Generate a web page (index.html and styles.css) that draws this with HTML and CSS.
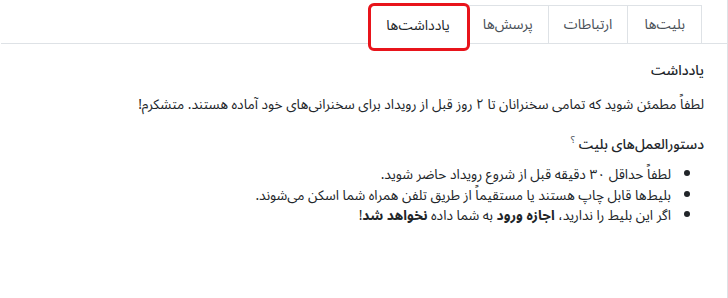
FILE: index.html
```html
<!DOCTYPE html>
<html lang="fa" dir="rtl">
<head>
<meta charset="utf-8">
<link rel="stylesheet" href="styles.css">
</head>
<body>
<div class="sheet">
  <nav class="tabs">
    <div class="tab">بلیت‌ها</div>
    <div class="tab">ارتباطات</div>
    <div class="tab">پرسش‌ها</div>
    <div class="tab active">یادداشت‌ها<span class="highlight"></span></div>
  </nav>
  <section class="pane">
    <h3 class="label">یادداشت</h3>
    <p class="note">لطفاً مطمئن شوید که تمامی سخنرانان تا ۲ روز قبل از رویداد برای سخنرانی‌های خود آماده هستند. متشکرم!</p>
    <h3 class="label second">دستورالعمل‌های بلیت <sup class="help">؟</sup></h3>
    <ul class="items">
      <li>لطفاً حداقل ۳۰ دقیقه قبل از شروع رویداد حاضر شوید.</li>
      <li>بلیط‌ها قابل چاپ هستند یا مستقیماً از طریق تلفن همراه شما اسکن می‌شوند.</li>
      <li>اگر این بلیط را ندارید، <b>اجازه ورود</b> به شما داده <b>نخواهد شد</b>!</li>
    </ul>
  </section>
</div>
</body>
</html>
```

FILE: styles.css
```css
html, body {
  margin: 0;
  padding: 0;
  background: #fff;
}
body {
  font-family: "Noto Sans Arabic", "Noto Sans Arabic UI", "Noto Naskh Arabic", "DejaVu Sans", sans-serif;
  color: #212529;
  font-size: 13.7px;
}
.sheet {
  width: 727px;
  height: 298px;
  border-right: 1px solid #dee2e6;
  box-sizing: border-box;
  direction: rtl;
}
.tabs {
  display: flex;
  padding: 5px 25px 0 0;
  border-bottom: 1px solid #dee2e6;
}
.tab {
  position: relative;
  height: 38px;
  padding: 0 15px;
  display: flex;
  align-items: center;
  border: 1px solid #dee2e6;
  border-bottom: none;
  margin-left: -1px;
  color: #495057;
  font-size: 14px;
  box-sizing: border-box;
}
.tab:first-child {
  padding: 0 16px;
}
.tab.active {
  color: #212529;
  background: #fff;
  margin-bottom: -1px;
  height: 39px;
  padding: 0 17px 0 16px;
}
.highlight {
  position: absolute;
  top: -3px;
  bottom: -7px;
  left: -2px;
  right: -3px;
  border: 3px solid #e8141b;
  border-radius: 6px;
}
.pane {
  padding: 0 23px 0 0;
}
.label {
  margin: 16px 0 0;
  font-size: 14px;
  font-weight: 500;
  line-height: 22px;
}
.label.second {
  margin-top: 18px;
}
.help {
  font-size: 10px;
  font-weight: 400;
  color: #495057;
  vertical-align: super;
  line-height: 0;
}
.note {
  margin: 12px 0 0;
  line-height: 22px;
}
.items {
  margin: 9px 0 0;
  padding: 0 33px 0 0;
  line-height: 20.5px;
}
```
